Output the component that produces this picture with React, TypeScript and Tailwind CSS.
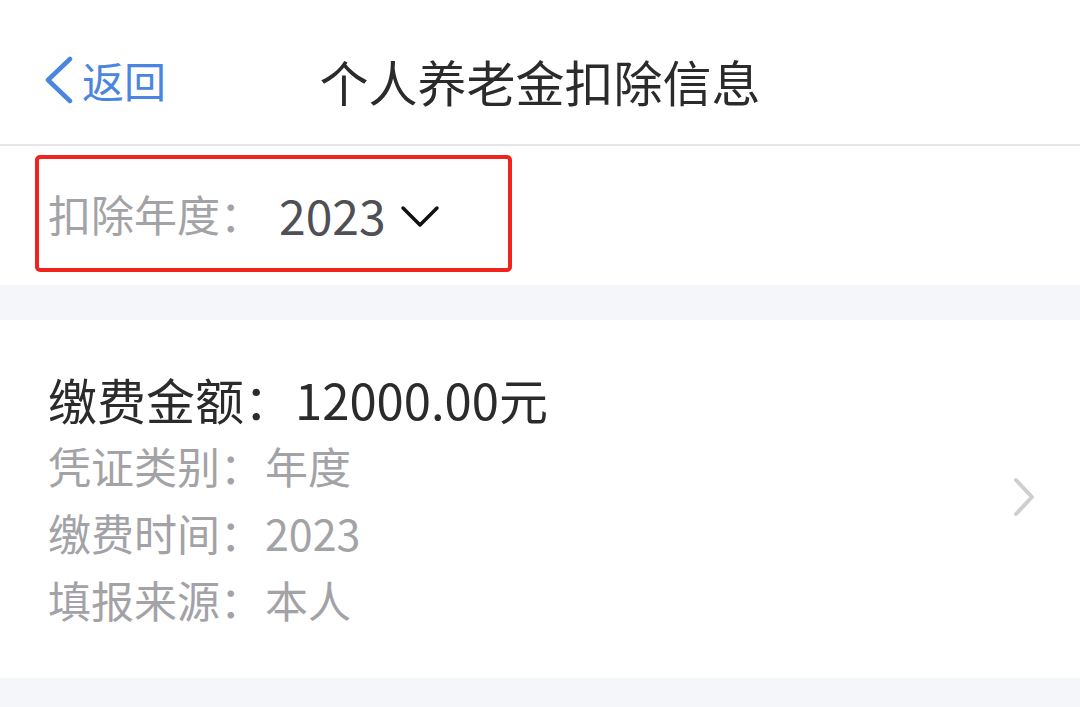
import React from "react";

const FONT = { fontFamily: '"Noto Sans CJK SC", "Noto Sans", sans-serif' };

function DetailLine({ label, value }: { label: string; value: string }) {
  return (
    <div className="flex h-[67px] items-center text-[43px] leading-none text-[#a3a3a7]">
      <span>{label}：</span>
      <span className="ml-[2px]">{value}</span>
    </div>
  );
}

export default function App() {
  return (
    <div className="flex h-[707px] w-[1080px] flex-col overflow-hidden bg-[#f5f6f9]" style={FONT}>
      {/* Nav bar */}
      <div className="relative flex h-[146px] shrink-0 items-center justify-center border-b-2 border-[#e6e6e8] bg-white">
        <div className="absolute left-[42px] top-[56px] flex items-center text-[#4a86e0]">
          <svg width="32" height="48" viewBox="0 0 32 48" fill="none">
            <path d="M28 3 L6 24 L28 45" stroke="currentColor" strokeWidth="4.5" strokeLinecap="round" strokeLinejoin="round" />
          </svg>
          <span className="ml-[8px] text-[42px] leading-none">返回</span>
        </div>
        <h1 className="pt-[16px] text-[49px] font-normal leading-none text-[#2b2b2b]">个人养老金扣除信息</h1>
      </div>

      {/* Year selector */}
      <div className="h-[139px] shrink-0 bg-white pl-[35px] pt-[9px]">
        <div className="flex h-[117px] w-[477px] items-center rounded-[5px] border-4 border-[#f0231e] pl-[9px]">
          <span className="text-[43px] leading-none text-[#a3a3a7]">扣除年度：</span>
          <span className="ml-[16px] text-[48px] leading-none text-[#4f4f55]">2023</span>
          <svg className="ml-[14px] mt-[4px]" width="40" height="24" viewBox="0 0 40 24" fill="none">
            <path d="M3 4 L20 21 L37 4" stroke="#111" strokeWidth="3.5" strokeLinecap="round" strokeLinejoin="round" />
          </svg>
        </div>
      </div>

      <div className="h-[35px] shrink-0" />

      {/* Record card */}
      <div className="flex h-[358px] shrink-0 items-start bg-white pl-[48px] pr-[44px] pt-[44px]">
        <div className="flex-1">
          <div className="flex h-[68px] items-center text-[49px] leading-none text-[#2b2b2b]">
            <span>缴费金额：</span>
            <span className="ml-[2px]">12000.00元</span>
          </div>
          <DetailLine label="凭证类别" value="年度" />
          <DetailLine label="缴费时间" value="2023" />
          <DetailLine label="填报来源" value="本人" />
        </div>
        <svg className="mt-[112px]" width="24" height="42" viewBox="0 0 24 42" fill="none">
          <path d="M4 4 L20 21 L4 38" stroke="#cfcfd2" strokeWidth="4" strokeLinecap="round" strokeLinejoin="round" />
        </svg>
      </div>
    </div>
  );
}
